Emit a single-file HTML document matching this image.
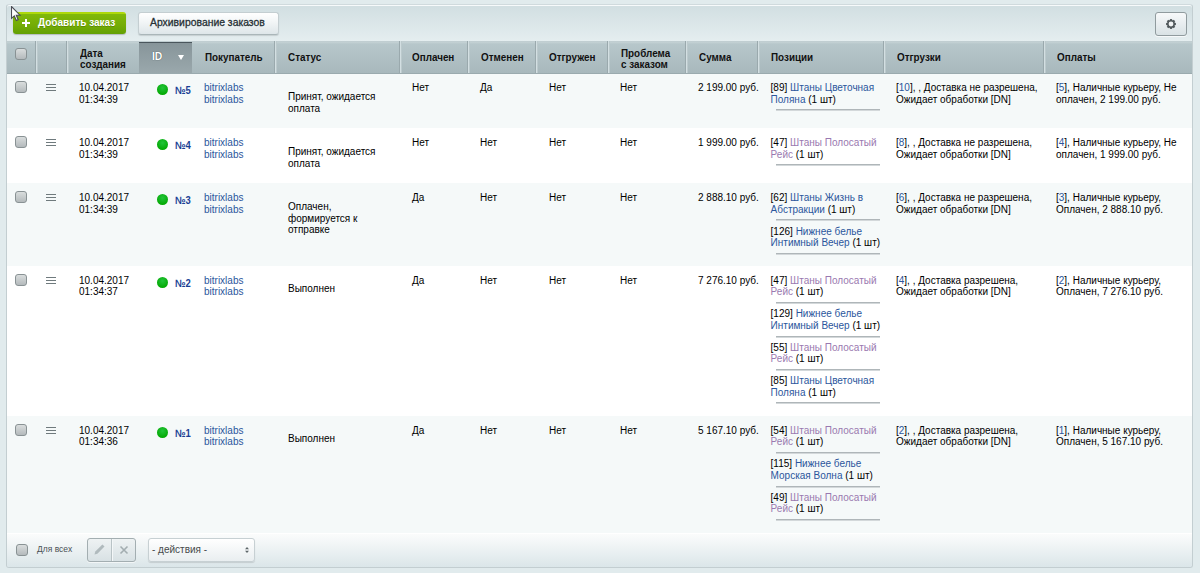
<!DOCTYPE html><html><head><meta charset="utf-8"><style>
*{box-sizing:border-box}
html,body{margin:0;padding:0}
body{width:1200px;height:573px;overflow:hidden;background:#e1ebed;font-family:"Liberation Sans",sans-serif;font-size:10px;color:#000;position:relative}
.abs{position:absolute}
.panel{position:absolute;left:6px;top:4px;width:1187px;height:564px;border:1px solid #c3ced1;border-top-color:#d0dadd;border-radius:3px;background:linear-gradient(#d2dfe2 1px,#d2dfe2 2px,#e5eef0 37px);box-shadow:inset 0 1px 0 #f7fafb;overflow:hidden}
.t{position:absolute;white-space:nowrap;line-height:11.5px}
.hd{position:absolute;top:41px;height:33px;background:linear-gradient(#bccace,#c5d2d5 1px,#b7c7cb 3px,#a8b8bc);border-bottom:1px solid #9aaaae}
.hdt{position:absolute;font-weight:bold;color:#111;font-size:10.5px;transform:scaleX(.94);transform-origin:0 0;white-space:nowrap;line-height:11.5px}
.div{position:absolute;top:41px;height:32px;width:3px;border-left:1px solid #9aa9ad;background:linear-gradient(90deg,#d3dfe2 50%,#bccacd 50%)}
.row{position:absolute;left:7px;width:1185px}
.cb{position:absolute;width:12px;height:12px;border:1px solid #899294;border-radius:3px;background:linear-gradient(#d9dddd,#b4babc);}
.ham{position:absolute;width:10px;height:7px;border-top:1px solid #6f7a7d;border-bottom:1px solid #6f7a7d}
.ham:after{content:"";position:absolute;left:0;right:0;top:2px;border-top:1px solid #6f7a7d}
.dot{position:absolute;width:11px;height:11px;border-radius:50%;background:radial-gradient(circle at 50% 35%,#22c43a,#03a903 75%)}
.id{position:absolute;font-weight:bold;color:#1a3f94;font-size:11px;line-height:11px;transform:scaleX(.86);transform-origin:0 0}
.lnk{color:#2b569c}
.vis{color:#9a79b0}
.sep{position:absolute;height:2px;background:linear-gradient(#afb6b9 50%,#d3d8da 50%);width:104px}
</style></head><body>
<div class="panel"></div>
<div class="hd" style="left:7px;width:1185px"></div>
<div class="hd" style="left:139px;width:53px;background:linear-gradient(#87959a,#9aa8ac);border-top:1px solid #4a565c;top:42px;height:32px"></div>
<div class="div" style="left:35px"></div>
<div class="div" style="left:66px"></div>
<div class="div" style="left:274px"></div>
<div class="div" style="left:399px"></div>
<div class="div" style="left:467px"></div>
<div class="div" style="left:535px"></div>
<div class="div" style="left:607px"></div>
<div class="div" style="left:685px"></div>
<div class="div" style="left:757px"></div>
<div class="div" style="left:883px"></div>
<div class="div" style="left:1043px"></div>
<div class="cb" style="left:15px;top:48px"></div>
<div class="hdt" style="left:80px;top:47.5px">Дата<br>создания</div>
<div class="hdt" style="left:152px;top:52px"><span style="color:#fff;font-size:11px;position:relative;top:-1px;text-shadow:0 0 1px rgba(30,40,45,.9)">ID</span></div>
<div class="hdt" style="left:205px;top:52px">Покупатель</div>
<div class="hdt" style="left:288px;top:52px">Статус</div>
<div class="hdt" style="left:412px;top:52px">Оплачен</div>
<div class="hdt" style="left:481px;top:52px">Отменен</div>
<div class="hdt" style="left:549px;top:52px">Отгружен</div>
<div class="hdt" style="left:621px;top:47.5px">Проблема<br>с заказом</div>
<div class="hdt" style="left:699px;top:52px">Сумма</div>
<div class="hdt" style="left:771px;top:52px">Позиции</div>
<div class="hdt" style="left:897px;top:52px">Отгрузки</div>
<div class="hdt" style="left:1057px;top:52px">Оплаты</div>
<div class="abs" style="left:177.5px;top:55px;width:0;height:0;border-left:3.5px solid transparent;border-right:3.5px solid transparent;border-top:5px solid #fff"></div>
<div class="row" style="top:74px;height:54px;background:#f5f9f9"></div>
<div class="cb" style="left:15px;top:81px"></div>
<div class="ham" style="left:46px;top:84px"></div>
<div class="t" style="left:79px;top:82px">10.04.2017<br>01:34:39</div>
<div class="dot" style="left:157px;top:84px"></div>
<div class="id" style="left:174.5px;top:85px">№5</div>
<div class="t lnk" style="left:204px;top:82px">bitrixlabs<br>bitrixlabs</div>
<div class="t" style="left:288px;top:91px">Принят, ожидается<br>оплата</div>
<div class="t" style="left:412px;top:82px">Нет</div>
<div class="t" style="left:480px;top:82px">Да</div>
<div class="t" style="left:549px;top:82px">Нет</div>
<div class="t" style="left:620px;top:82px">Нет</div>
<div class="t" style="left:698px;top:82px">2 199.00 руб.</div>
<div class="t" style="left:770.6px;top:82.0px">[89] <span class="lnk">Штаны Цветочная<br>Поляна</span> (1 шт)</div>
<div class="sep" style="left:776px;top:109px"></div>
<div class="t" style="left:896px;top:82px">[<span class="lnk">10</span>], , Доставка не разрешена,<br>Ожидает обработки [DN]</div>
<div class="t" style="left:1056px;top:82px">[<span class="lnk">5</span>], Наличные курьеру, Не<br>оплачен, 2 199.00 руб.</div>
<div class="row" style="top:128px;height:55px;background:#ffffff"></div>
<div class="cb" style="left:15px;top:136px"></div>
<div class="ham" style="left:46px;top:139px"></div>
<div class="t" style="left:79px;top:137px">10.04.2017<br>01:34:39</div>
<div class="dot" style="left:157px;top:139px"></div>
<div class="id" style="left:174.5px;top:140px">№4</div>
<div class="t lnk" style="left:204px;top:137px">bitrixlabs<br>bitrixlabs</div>
<div class="t" style="left:288px;top:146.4px">Принят, ожидается<br>оплата</div>
<div class="t" style="left:412px;top:137px">Нет</div>
<div class="t" style="left:480px;top:137px">Нет</div>
<div class="t" style="left:549px;top:137px">Нет</div>
<div class="t" style="left:620px;top:137px">Нет</div>
<div class="t" style="left:698px;top:137px">1 999.00 руб.</div>
<div class="t" style="left:770.6px;top:137.0px">[47] <span class="vis">Штаны Полосатый<br>Рейс</span> (1 шт)</div>
<div class="sep" style="left:776px;top:164px"></div>
<div class="t" style="left:896px;top:137px">[<span class="lnk">8</span>], , Доставка не разрешена,<br>Ожидает обработки [DN]</div>
<div class="t" style="left:1056px;top:137px">[<span class="lnk">4</span>], Наличные курьеру, Не<br>оплачен, 1 999.00 руб.</div>
<div class="row" style="top:183px;height:83px;background:#f5f9f9"></div>
<div class="cb" style="left:15px;top:191px"></div>
<div class="ham" style="left:46px;top:194px"></div>
<div class="t" style="left:79px;top:192px">10.04.2017<br>01:34:39</div>
<div class="dot" style="left:157px;top:194px"></div>
<div class="id" style="left:174.5px;top:195px">№3</div>
<div class="t lnk" style="left:204px;top:192px">bitrixlabs<br>bitrixlabs</div>
<div class="t" style="left:288px;top:201.4px">Оплачен,<br>формируется к<br>отправке</div>
<div class="t" style="left:412px;top:192px">Да</div>
<div class="t" style="left:480px;top:192px">Нет</div>
<div class="t" style="left:549px;top:192px">Нет</div>
<div class="t" style="left:620px;top:192px">Нет</div>
<div class="t" style="left:698px;top:192px">2 888.10 руб.</div>
<div class="t" style="left:770.6px;top:192.0px">[62] <span class="lnk">Штаны Жизнь в<br>Абстракции</span> (1 шт)</div>
<div class="sep" style="left:776px;top:219px"></div>
<div class="t" style="left:770.6px;top:225.5px">[126] <span class="lnk">Нижнее белье<br>Интимный Вечер</span> (1 шт)</div>
<div class="sep" style="left:776px;top:253px"></div>
<div class="t" style="left:896px;top:192px">[<span class="lnk">6</span>], , Доставка не разрешена,<br>Ожидает обработки [DN]</div>
<div class="t" style="left:1056px;top:192px">[<span class="lnk">3</span>], Наличные курьеру,<br>Оплачен, 2 888.10 руб.</div>
<div class="row" style="top:266px;height:150px;background:#ffffff"></div>
<div class="cb" style="left:15px;top:273.6px"></div>
<div class="ham" style="left:46px;top:276.6px"></div>
<div class="t" style="left:79px;top:274.6px">10.04.2017<br>01:34:37</div>
<div class="dot" style="left:157px;top:276.6px"></div>
<div class="id" style="left:174.5px;top:277.6px">№2</div>
<div class="t lnk" style="left:204px;top:274.6px">bitrixlabs<br>bitrixlabs</div>
<div class="t" style="left:288px;top:283.20000000000005px">Выполнен</div>
<div class="t" style="left:412px;top:274.6px">Да</div>
<div class="t" style="left:480px;top:274.6px">Нет</div>
<div class="t" style="left:549px;top:274.6px">Нет</div>
<div class="t" style="left:620px;top:274.6px">Нет</div>
<div class="t" style="left:698px;top:274.6px">7 276.10 руб.</div>
<div class="t" style="left:770.6px;top:274.6px">[47] <span class="vis">Штаны Полосатый<br>Рейс</span> (1 шт)</div>
<div class="sep" style="left:776px;top:302px"></div>
<div class="t" style="left:770.6px;top:308.1px">[129] <span class="lnk">Нижнее белье<br>Интимный Вечер</span> (1 шт)</div>
<div class="sep" style="left:776px;top:336px"></div>
<div class="t" style="left:770.6px;top:341.6px">[55] <span class="vis">Штаны Полосатый<br>Рейс</span> (1 шт)</div>
<div class="sep" style="left:776px;top:369px"></div>
<div class="t" style="left:770.6px;top:375.1px">[85] <span class="lnk">Штаны Цветочная<br>Поляна</span> (1 шт)</div>
<div class="sep" style="left:776px;top:402px"></div>
<div class="t" style="left:896px;top:274.6px">[<span class="lnk">4</span>], , Доставка разрешена,<br>Ожидает обработки [DN]</div>
<div class="t" style="left:1056px;top:274.6px">[<span class="lnk">2</span>], Наличные курьеру,<br>Оплачен, 7 276.10 руб.</div>
<div class="row" style="top:416px;height:117px;background:#f5f9f9"></div>
<div class="cb" style="left:15px;top:423.6px"></div>
<div class="ham" style="left:46px;top:426.6px"></div>
<div class="t" style="left:79px;top:424.6px">10.04.2017<br>01:34:36</div>
<div class="dot" style="left:157px;top:426.6px"></div>
<div class="id" style="left:174.5px;top:427.6px">№1</div>
<div class="t lnk" style="left:204px;top:424.6px">bitrixlabs<br>bitrixlabs</div>
<div class="t" style="left:288px;top:432.6px">Выполнен</div>
<div class="t" style="left:412px;top:424.6px">Да</div>
<div class="t" style="left:480px;top:424.6px">Нет</div>
<div class="t" style="left:549px;top:424.6px">Нет</div>
<div class="t" style="left:620px;top:424.6px">Нет</div>
<div class="t" style="left:698px;top:424.6px">5 167.10 руб.</div>
<div class="t" style="left:770.6px;top:424.6px">[54] <span class="vis">Штаны Полосатый<br>Рейс</span> (1 шт)</div>
<div class="sep" style="left:776px;top:452px"></div>
<div class="t" style="left:770.6px;top:458.1px">[115] <span class="lnk">Нижнее белье<br>Морская Волна</span> (1 шт)</div>
<div class="sep" style="left:776px;top:486px"></div>
<div class="t" style="left:770.6px;top:491.6px">[49] <span class="vis">Штаны Полосатый<br>Рейс</span> (1 шт)</div>
<div class="sep" style="left:776px;top:519px"></div>
<div class="t" style="left:896px;top:424.6px">[<span class="lnk">2</span>], , Доставка разрешена,<br>Ожидает обработки [DN]</div>
<div class="t" style="left:1056px;top:424.6px">[<span class="lnk">1</span>], Наличные курьеру,<br>Оплачен, 5 167.10 руб.</div>
<div class="abs" style="left:7px;top:531px;width:1185px;height:2px;background:#f5f9f9"></div>
<div class="abs" style="left:7px;top:533px;width:1185px;height:34px;border-top:1px solid #fff;background:linear-gradient(#fbfcfc,#dbe6e9);border-radius:0 0 2px 2px"></div>
<div class="cb" style="left:16px;top:544px"></div>
<div class="t" style="left:37px;top:544px;font-size:8.5px;color:#4a5154">Для всех</div>
<div class="abs" style="left:13px;top:12px;width:113px;height:22px;border-radius:3px;background:linear-gradient(#aed80c 1.5px,#80b80a 2.5px,#74ac06 60%,#62a004);box-shadow:0 1px 1px rgba(0,0,0,.2)"></div>
<div class="abs" style="left:22px;top:19px;width:8px;height:8px"><div class="abs" style="left:3px;top:0;width:2px;height:8px;background:#fff"></div><div class="abs" style="left:0;top:3px;width:8px;height:2px;background:#fff"></div></div>
<div class="t" style="left:38px;top:17px;font-weight:bold;color:#fff;text-shadow:0 1px 0 rgba(0,0,0,.2)">Добавить заказ</div>
<div class="abs" style="left:138px;top:11.5px;width:141px;height:23.5px;border-radius:3px;border:1px solid #c4ced1;border-bottom-color:#aab6b9;background:linear-gradient(#ffffff,#f3f6f7 40%,#dee6e9);box-shadow:0 1px 1px rgba(0,0,0,.12)"></div>
<div class="t" style="left:150px;top:17px;font-size:10.4px;color:#263035;-webkit-text-stroke:0.3px #263035">Архивирование заказов</div>
<div class="abs" style="left:1155px;top:12px;width:32px;height:24px;border-radius:3px;border:1px solid #909b9e;background:linear-gradient(#f7f9fa,#d9e2e5);box-shadow:0 1px 0 rgba(255,255,255,.7)"></div>
<svg class="abs" style="left:1164px;top:16.5px" width="14" height="14" viewBox="0 0 14 14"><g fill="#50585b"><circle cx="7" cy="7" r="3.9"/><rect x="5.9" y="2.1" width="2.2" height="2.4" transform="rotate(0 7 7)"/><rect x="5.9" y="2.1" width="2.2" height="2.4" transform="rotate(45 7 7)"/><rect x="5.9" y="2.1" width="2.2" height="2.4" transform="rotate(90 7 7)"/><rect x="5.9" y="2.1" width="2.2" height="2.4" transform="rotate(135 7 7)"/><rect x="5.9" y="2.1" width="2.2" height="2.4" transform="rotate(180 7 7)"/><rect x="5.9" y="2.1" width="2.2" height="2.4" transform="rotate(225 7 7)"/><rect x="5.9" y="2.1" width="2.2" height="2.4" transform="rotate(270 7 7)"/><rect x="5.9" y="2.1" width="2.2" height="2.4" transform="rotate(315 7 7)"/></g><circle cx="7" cy="7" r="2.4" fill="#f0f3f4"/></svg>
<div class="abs" style="left:87px;top:538px;width:49px;height:24px;border-radius:3px;border:1px solid #a3aeb1;background:linear-gradient(#eef2f3,#d8e1e4);box-shadow:0 1px 0 rgba(255,255,255,.6)"></div>
<div class="abs" style="left:111px;top:539px;width:2px;height:22px;background:#b9c3c6;border-right:1px solid #f4f7f8"></div>
<svg class="abs" style="left:93px;top:543px" width="13" height="13" viewBox="0 0 13 13"><path d="M1.5 11.5 L2.3 8.6 L9.4 1.5 L11.5 3.6 L4.4 10.7 Z" fill="#b0babd"/></svg>
<svg class="abs" style="left:119px;top:545px" width="10" height="10" viewBox="0 0 10 10"><path d="M1.5 1.5 L8.5 8.5 M8.5 1.5 L1.5 8.5" stroke="#a3adb0" stroke-width="1.6"/></svg>
<div class="abs" style="left:148px;top:538px;width:107px;height:24px;border-radius:3px;border:1px solid #c7d0d3;background:linear-gradient(#ffffff,#e9eef0);box-shadow:0 1px 1px rgba(0,0,0,.12)"></div>
<div class="t" style="left:152px;top:544px;color:#474a4b">- действия -</div>
<svg class="abs" style="left:244px;top:546px" width="6" height="8" viewBox="0 0 6 8"><path d="M1 3.2 L3 1 L5 3.2 Z M1 4.8 L3 7 L5 4.8 Z" fill="#5d6669"/></svg>
<svg class="abs" style="left:10.7px;top:5.6px" width="12" height="16" viewBox="0 0 12 16"><path d="M0.5 0.5 L0.5 12.3 L3.3 9.8 L5.3 14.5 L7.2 13.7 L5.3 9.2 L9 9.2 Z" fill="#fff" stroke="#4a4c55" stroke-width="1.1"/></svg>
</body></html>
